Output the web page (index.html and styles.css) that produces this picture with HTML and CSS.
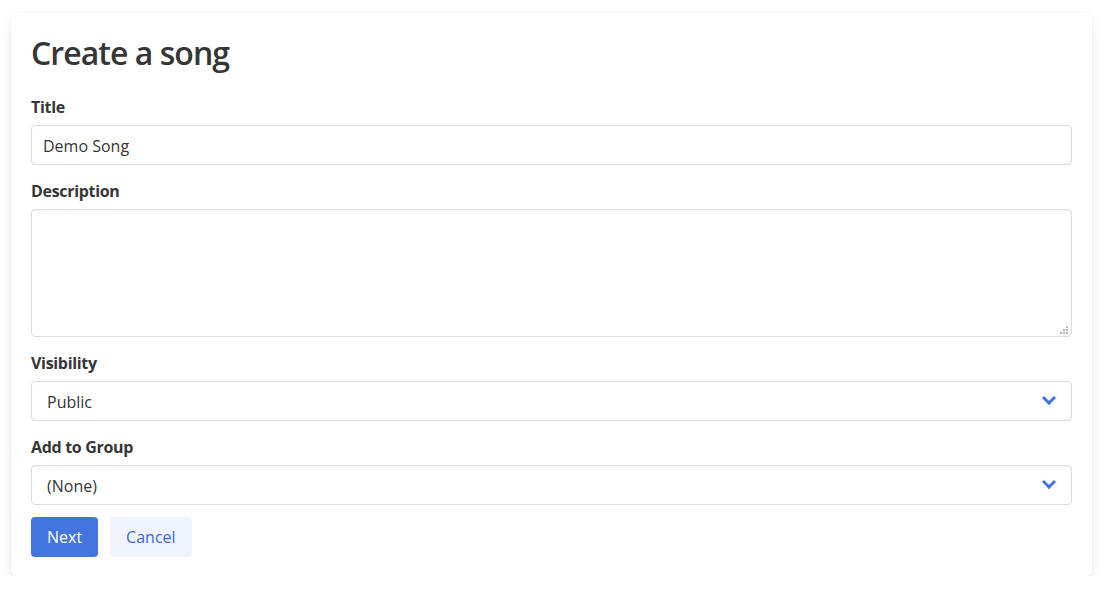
FILE: index.html
```
<!DOCTYPE html>
<html lang="en">

<head>
  <meta charset="UTF-8" />
  <meta name="viewport" content="width=device-width, initial-scale=1.0" />
  <title>Create a song</title>
  <link rel="stylesheet" href="styles.css">
</head>

<body>
  <div class="box">
    <h1 class="title">Create a song</h1>
    <form id="song-form">
      <div class="field">
        <label class="label">Title</label>
        <input class="input" type="text" name="title" value="Demo Song" />
      </div>

      <div class="field">
        <label class="label">Description</label>
        <div class="control grip">
          <textarea class="textarea" name="description"></textarea>
        </div>
      </div>

      <div class="field">
        <label class="label">Visibility</label>
        <div class="select">
          <select name="visibility">
            <option>Public</option>
            <option>Private</option>
          </select>
        </div>
      </div>

      <div class="field">
        <label class="label">Add to Group</label>
        <div class="select">
          <select name="group">
            <option>(None)</option>
          </select>
        </div>
      </div>

      <div class="buttons">
        <button type="submit" class="button is-link">Next</button>
        <button type="button" class="button is-light">Cancel</button>
      </div>
    </form>
  </div>
</body>

</html>
```

FILE: styles.css
```
html,
body {
  margin: 0;
  padding: 0;
}

body {
  font-family: "Open Sans", "Noto Sans", sans-serif;
  font-size: 16px;
  line-height: 1.5;
  color: #363636;
  background: #fff;
  padding: 13px 21px 0 11px;
}

.box {
  background: #fff;
  border-radius: 6px;
  box-shadow: 0 8px 16px -2px rgba(10, 10, 10, 0.1), 0 0 0 1px rgba(10, 10, 10, 0.02);
  padding: 20px 20px 19px;
}

.title {
  margin: 0 0 22px;
  padding-top: 2px;
  font-size: 32px;
  font-weight: 600;
  line-height: 1.125;
  letter-spacing: -0.03em;
  color: #363636;
}

.field {
  margin-bottom: 12px;
}

.label {
  display: block;
  font-weight: 700;
  padding-top: 2px;
  margin-bottom: 6px;
  letter-spacing: -0.02em;
  color: #363636;
}

.input,
.textarea,
.select select {
  display: block;
  width: 100%;
  box-sizing: border-box;
  font-family: inherit;
  font-size: 16px;
  color: #363636;
  background: #fff;
  border: 1px solid #dbdbdb;
  border-radius: 4px;
  box-shadow: inset 0 1px 2px rgba(10, 10, 10, 0.03);
  outline: none;
}

.input {
  height: 40px;
  padding: 1px 11px 0;
}

.control {
  position: relative;
}

.textarea {
  height: 128px;
  padding: 11px;
  resize: none;
}

/* dotted resize grip in the corner */
.grip::after {
  content: "";
  position: absolute;
  right: 4px;
  bottom: 3px;
  width: 2px;
  height: 2px;
  background: #b5b5b5;
  box-shadow: -3px 0 #b5b5b5, -6px 0 #b5b5b5, 0 -3px #b5b5b5, -3px -3px #b5b5b5, 0 -6px #b5b5b5;
  pointer-events: none;
}

.select {
  position: relative;
}

.select select {
  height: 40px;
  padding: 1px 40px 0 15px;
  appearance: none;
  -webkit-appearance: none;
  cursor: pointer;
}

.select::after {
  content: "";
  position: absolute;
  right: 18px;
  top: 12px;
  width: 7px;
  height: 7px;
  border: 3px solid #4374e0;
  border-top: 0;
  border-left: 0;
  transform: rotate(45deg);
  pointer-events: none;
}

.buttons {
  display: flex;
  gap: 12px;
}

.button {
  height: 40px;
  padding: 0 16px;
  border: none;
  border-radius: 4px;
  font-family: inherit;
  font-size: 16px;
  cursor: pointer;
}

.button.is-link {
  background-color: #4374e0;
  color: #fff;
}

.button.is-light {
  background-color: #eef3fc;
  color: #3e6ad0;
}
```
